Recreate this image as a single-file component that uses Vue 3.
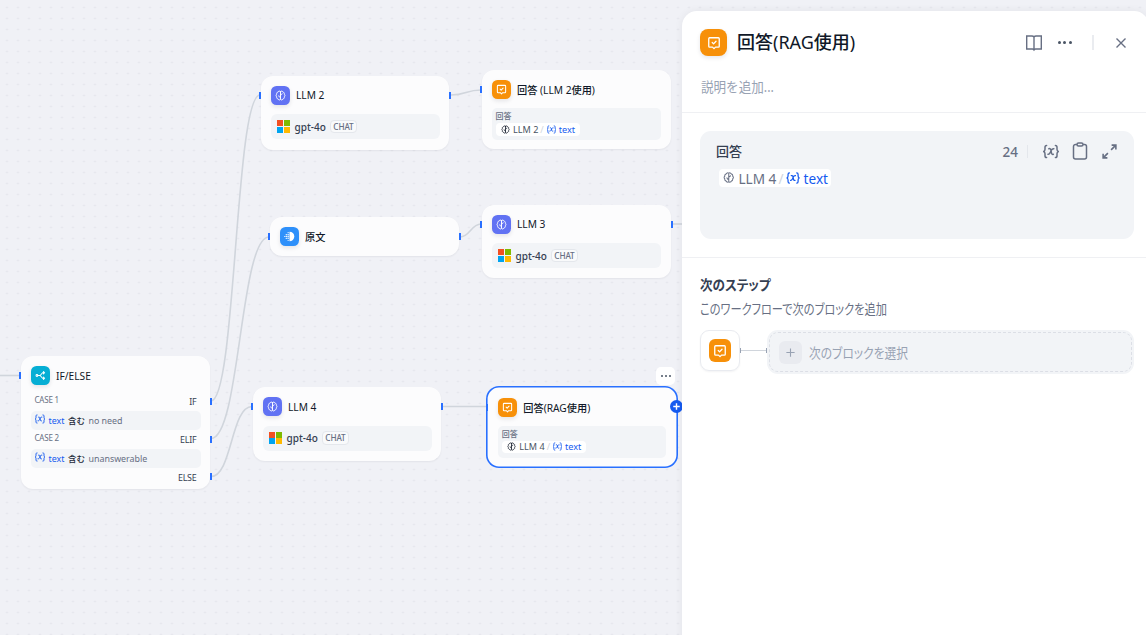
<template>
  <div class="workflow">
    <svg class="sprite" aria-hidden="true">
      <symbol id="i-llm" viewBox="0 0 16 16">
        <g fill="none" stroke="currentColor" stroke-width="1.4" stroke-linecap="round" stroke-linejoin="round">
          <path d="M8 2.2C6.9 1 4.9 1.5 4.5 3 2.9 3.2 2.1 4.7 2.6 6 1.2 7.1 1.2 8.9 2.6 10 2.1 11.4 2.9 12.8 4.5 13 4.9 14.5 6.9 15 8 13.8 9.1 15 11.1 14.5 11.5 13 13.1 12.8 13.9 11.4 13.4 10 14.8 8.9 14.8 7.1 13.4 6 13.9 4.7 13.1 3.2 11.5 3 11.1 1.5 9.1 1 8 2.2Z" />
          <path d="M8 3v10M8 10.8C6.5 10.6 5.7 9.8 5.5 8.5M8 7.3C9.3 7.1 10.2 6.5 10.4 5.5" />
        </g>
      </symbol>
      <symbol id="i-answer" viewBox="0 0 16 16">
        <g fill="none" stroke="currentColor" stroke-width="1.5" stroke-linecap="round" stroke-linejoin="round">
          <path d="M3 2h10a1 1 0 0 1 1 1v8.7a1 1 0 0 1-1 1H9.7L8 14.4 6.3 12.7H3a1 1 0 0 1-1-1V3a1 1 0 0 1 1-1Z" />
          <path d="m6 7.5 1.5 1.5 2.8-3" />
        </g>
      </symbol>
      <symbol id="i-knowledge" viewBox="0 0 16 16">
        <g fill="currentColor">
          <path d="M8 1a7 7 0 0 1 0 14Z" />
          <circle cx="6" cy="2.5" r=".9" />
          <circle cx="6" cy="5.3" r="1.1" />
          <circle cx="6" cy="8" r="1.1" />
          <circle cx="6" cy="10.7" r="1.1" />
          <circle cx="6" cy="13.5" r=".9" />
          <circle cx="3.3" cy="5.3" r="1" />
          <circle cx="3.3" cy="8" r="1.1" />
          <circle cx="3.3" cy="10.7" r="1" />
          <circle cx="1" cy="8" r=".8" />
        </g>
      </symbol>
      <symbol id="i-branch" viewBox="0 0 16 16">
        <g fill="none" stroke="currentColor" stroke-width="1.5" stroke-linecap="round" stroke-linejoin="round">
          <circle cx="2.8" cy="8" r="1.3" />
          <path d="M4.3 8H7.5l3.5-4h2.8M7.5 8l3.5 4h2.8M12.3 2.3 14 4l-1.7 1.7M12.3 10.3 14 12l-1.7 1.7" />
        </g>
      </symbol>
      <symbol id="i-var" viewBox="0 0 18 16">
        <g fill="none" stroke="currentColor" stroke-width="1.6" stroke-linecap="round" stroke-linejoin="round">
          <path d="M4.3 1.5C2.8 1.5 2.6 2.3 2.6 3.5v2C2.6 7 2.2 7.5 1.2 8c1 .5 1.4 1 1.4 2.5v2c0 1.2.2 2 1.7 2M13.7 1.5c1.5 0 1.7.8 1.7 2v2c0 1.5.4 2 1.4 2.5-1 .5-1.4 1-1.4 2.5v2c0 1.2-.2 2-1.7 2" />
          <path d="M6.7 5c1.3-.4 1.9.2 2.2 1.5l.6 3c.3 1.4.9 1.9 2 1.5M12 5c-1.5-.3-2.2.7-3 2.2L8.3 9C7.5 10.5 7 11.3 5.8 11" />
        </g>
      </symbol>
    </svg>

    <main class="canvas">
      <svg class="edges" width="1146" height="635">
        <path v-for="d in edges" :key="d" :d="d" />
      </svg>

      <section
        v-for="node in nodes"
        :key="node.id"
        class="node"
        :class="{ selected: node.selected }"
        :style="{ left: node.x + 'px', top: node.y + 'px', width: node.w + 'px', height: node.h + 'px' }"
      >
        <i v-for="(p, i) in node.handles" :key="i" class="handle" :class="p[0]" :style="{ top: p[1] + 'px' }"></i>
        <header class="node-head">
          <span class="block-icon" :class="node.type"><svg><use :href="'#i-' + node.type" /></svg></span>
          <span class="node-title">{{ node.title }}</span>
        </header>

        <div v-if="node.type === 'llm'" class="model">
          <span class="ms"><b></b><b></b><b></b><b></b></span>
          <span class="model-name">gpt-4o</span>
          <span class="mode">CHAT</span>
        </div>

        <div v-else-if="node.type === 'answer'" class="answer-box">
          <span class="answer-label">回答</span>
          <span class="chip">
            <svg class="chip-llm"><use href="#i-llm" /></svg>
            <span>{{ node.source }}</span>
            <em>/</em>
            <svg class="chip-var"><use href="#i-var" /></svg>
            <span class="var-name">text</span>
          </span>
        </div>

        <div v-else-if="node.type === 'branch'" class="cases">
          <template v-for="c in cases" :key="c.name">
            <div class="case-row"><span>{{ c.name }}</span><strong>{{ c.branch }}</strong></div>
            <div class="condition">
              <svg><use href="#i-var" /></svg>
              <span class="var-name">text</span>
              <b>含む</b>
              <span>{{ c.value }}</span>
            </div>
          </template>
          <div class="case-row"><span></span><strong>ELSE</strong></div>
        </div>

        <template v-if="node.selected">
          <span class="node-menu"><i></i><i></i><i></i></span>
          <span class="node-add"><svg viewBox="0 0 12 12"><path d="M6 3v6M3 6h6" /></svg></span>
        </template>
      </section>
    </main>

    <aside class="panel">
      <div class="panel-top">
        <div class="panel-head">
          <span class="block-icon answer large"><svg><use href="#i-answer" /></svg></span>
          <h1>回答(RAG使用)</h1>
          <div class="actions">
            <svg class="book" viewBox="0 0 18 18"><path d="M9 3v13.5M9 3C8.5 2.3 8 2 7 2H1.7v13H7.5c.8 0 1.2.3 1.5.8.3-.5.7-.8 1.5-.8h5.8V2H11c-1 0-1.5.3-2 1Z" /></svg>
            <span class="dots"><i></i><i></i><i></i></span>
            <span class="bar"></span>
            <svg class="close" viewBox="0 0 12 12"><path d="m1.5 1.5 9 9M10.5 1.5l-9 9" /></svg>
          </div>
        </div>
        <p class="desc"><span>説明を追加...</span></p>
      </div>

      <div class="panel-editor">
        <div class="editor">
          <div class="editor-head">
            <span class="editor-label">回答</span>
            <span class="count">24</span>
            <span class="editor-bar"></span>
            <svg class="e-var"><use href="#i-var" /></svg>
            <svg class="e-clip" viewBox="0 0 16 18"><path d="M5 2.5H3.5a2 2 0 0 0-2 2V15a2 2 0 0 0 2 2h9a2 2 0 0 0 2-2V4.5a2 2 0 0 0-2-2H11M6.5 1h3a1.5 1.5 0 0 1 0 3h-3a1.5 1.5 0 0 1 0-3Z" /></svg>
            <svg class="e-expand" viewBox="0 0 16 16"><path d="M10 2h4v4M14 2 9.5 6.5M6 14H2v-4M2 14l4.5-4.5" /></svg>
          </div>
          <span class="chip big">
            <svg class="chip-llm"><use href="#i-llm" /></svg>
            <span>LLM 4</span>
            <em>/</em>
            <svg class="chip-var"><use href="#i-var" /></svg>
            <span class="var-name">text</span>
          </span>
        </div>
      </div>

      <div class="next">
        <h2><span>次のステップ</span></h2>
        <p><span>このワークフローで次のブロックを追加</span></p>
        <div class="next-row">
          <div class="next-source"><span class="block-icon answer mid"><svg><use href="#i-answer" /></svg></span></div>
          <div class="link"></div>
          <div class="next-select">
            <span class="plus"><svg viewBox="0 0 12 12"><path d="M6 1.5v9M1.5 6h9" /></svg></span>
            <span class="next-text">次のブロックを選択</span>
          </div>
        </div>
      </div>
    </aside>
  </div>
</template>

<script setup>
const nodes = [
  { id: 'llm2', type: 'llm', title: 'LLM 2', x: 261, y: 75.5, w: 188, h: 74, handles: [['in', 16], ['out', 16]] },
  { id: 'answer2', type: 'answer', title: '回答 (LLM 2使用)', source: 'LLM 2', x: 482, y: 70, w: 188.5, h: 79, handles: [['in', 16]] },
  { id: 'source', type: 'knowledge', title: '原文', x: 270, y: 217, w: 188.5, h: 39, handles: [['in', 16], ['out', 16]] },
  { id: 'llm3', type: 'llm', title: 'LLM 3', x: 482, y: 204.5, w: 188.5, h: 73.5, handles: [['in', 16], ['out', 16]] },
  { id: 'ifelse', type: 'branch', title: 'IF/ELSE', x: 21, y: 356, w: 189, h: 133, handles: [['in', 16], ['out', 42], ['out', 79.5], ['out', 117]] },
  { id: 'llm4', type: 'llm', title: 'LLM 4', x: 253, y: 387, w: 188, h: 74, handles: [['in', 16], ['out', 16]] },
  { id: 'answer4', type: 'answer', title: '回答(RAG使用)', source: 'LLM 4', x: 486, y: 385.5, w: 192, h: 82.5, selected: true, handles: [['in', 16]] }
]

const cases = [
  { name: 'CASE 1', branch: 'IF', value: 'no need' },
  { name: 'CASE 2', branch: 'ELIF', value: 'unanswerable' }
]

const edges = [
  'M0 375.5H20',
  'M211 401C236 401 235 95 260 95',
  'M211 438.5C240 438.5 240 237 269 237',
  'M211 476.5C232 476.5 231 406.5 252 406.5',
  'M451 95C466 95 466 90 481 90',
  'M460 237C470 237 471 224 481 224',
  'M442 406.5H487',
  'M672 224H682'
]
</script>

<style>
body {
  background: #f0f1f6;
  overflow: hidden;
}
</style>

<style scoped>
.workflow {
  position: relative;
  width: 1146px;
  height: 635px;
  overflow: hidden;
  color: #354052;
  font-family: "Noto Sans", "Noto Sans CJK JP", sans-serif;
  white-space: nowrap;
}

.workflow * {
  box-sizing: border-box;
}

.sprite {
  position: absolute;
  width: 0;
  height: 0;
}

.canvas {
  height: 635px;
  background-color: #f0f1f6;
  background-image: radial-gradient(circle, #e2e4ea 0.7px, transparent 1.2px);
  background-size: 11.01px 11.01px;
  background-position: 1.5px 2px;
}

.edges {
  position: absolute;
  inset: 0;
}

.edges path {
  fill: none;
  stroke: #d0d5dc;
  stroke-width: 1.6;
}

/* nodes on the free canvas */
.node {
  position: absolute;
  padding: 10px 9.5px;
  border-radius: 12px;
  background: #fcfcfd;
  box-shadow: 0 1px 2px rgba(16, 24, 40, 0.06);
}

/* the ring is a shadow so that it can be thinner than 2px */
.node.selected {
  padding: 12px 11.8px;
  border-radius: 13px;
  box-shadow: inset 0 0 0 1.6px #2970ff;
}

.handle {
  position: absolute;
  width: 2px;
  height: 7px;
  background: #2970ff;
}

.handle.in {
  left: -2px;
}

.handle.out {
  right: -2px;
}

.selected .handle.in {
  left: 0;
  margin-top: 2px;
}

.node-head {
  display: flex;
  align-items: center;
  gap: 6.5px;
  height: 19px;
}

.block-icon {
  display: flex;
  flex: none;
  align-items: center;
  justify-content: center;
  width: 19px;
  height: 19px;
  border-radius: 5.5px;
  color: #fff;
  box-shadow: 0 2px 4px rgba(16, 24, 40, 0.1);
}

.block-icon svg {
  width: 11px;
  height: 11px;
}

.block-icon.llm {
  background: #6172f3;
}

.block-icon.answer {
  background: #f79009;
}

.block-icon.knowledge {
  background: #2e90fa;
}

.block-icon.branch {
  background: #06aed4;
}

.block-icon.large {
  width: 27px;
  height: 27px;
  border-radius: 8px;
}

.block-icon.large svg {
  width: 14px;
  height: 14px;
}

.block-icon.mid {
  width: 22px;
  height: 23px;
  border-radius: 6px;
  box-shadow: none;
}

.block-icon.mid svg {
  width: 14px;
  height: 14px;
}

.node-title {
  color: #101828;
  font-size: 10.2px;
  font-weight: 450;
}

.model {
  display: flex;
  align-items: center;
  height: 25px;
  margin-top: 9.5px;
  padding: 0 6.5px;
  border-radius: 6px;
  background: #f2f4f7;
}

.ms {
  display: grid;
  grid-template-columns: 6px 6px;
  grid-template-rows: 6px 6px;
  gap: 0.5px;
}

.ms b:nth-child(1) {
  background: #f25022;
}

.ms b:nth-child(2) {
  background: #7fba00;
}

.ms b:nth-child(3) {
  background: #00a4ef;
}

.ms b:nth-child(4) {
  background: #ffb900;
}

.model-name {
  margin-left: 5px;
  color: #354052;
  font-size: 10px;
  font-weight: 500;
}

.mode {
  margin-left: 4px;
  padding: 0 2.5px;
  border: 1px solid #e4e7ec;
  border-radius: 4px;
  background: #f9fafb;
  color: #676f83;
  font-size: 8.2px;
  letter-spacing: -0.1px;
  font-weight: 500;
  line-height: 11.5px;
}

.answer-box {
  display: flex;
  flex-direction: column;
  align-items: flex-start;
  height: 32px;
  margin-top: 9px;
  padding: 3px 4px;
  border-radius: 5px;
  background: #f2f4f7;
}

.answer-label {
  height: 12px;
  color: #676f83;
  font-size: 8px;
  font-weight: 500;
  line-height: 10px;
}

.chip {
  display: flex;
  align-items: center;
  height: 12.5px;
  padding: 0 5px 0 5.5px;
  border-radius: 4px;
  background: #fff;
  color: #495464;
  font-size: 9.1px;
}

.chip-llm {
  width: 9px;
  height: 9px;
  margin-right: 3px;
  color: #101828;
}

.chip em {
  margin: 0 2px;
  color: #d0d5dd;
  font-style: normal;
}

.chip-var {
  width: 11px;
  height: 9px;
  margin-right: 2px;
  color: #155aef;
}

.var-name {
  color: #155aef;
}

.cases {
  margin-top: 6.5px;
}

.case-row {
  display: flex;
  align-items: center;
  justify-content: space-between;
  height: 19px;
  padding: 0 4px;
  color: #676f83;
  font-size: 8px;
  letter-spacing: -0.2px;
}

.case-row span {
  padding-bottom: 3px;
}

.case-row strong {
  color: #354052;
  font-size: 8.9px;
  font-weight: 450;
}

.condition {
  display: flex;
  align-items: center;
  height: 19px;
  padding: 0 3px;
  border-radius: 5px;
  background: #f2f4f7;
  color: #676f83;
  font-size: 8.9px;
}

.condition svg {
  width: 12px;
  height: 10px;
  margin: -2px 3px 0 0;
  color: #155aef;
}

.condition b {
  margin: 0 3.5px;
  color: #1d2939;
  font-size: 8.5px;
  font-weight: 500;
}

.node-menu {
  position: absolute;
  top: -19px;
  right: 3px;
  display: flex;
  align-items: center;
  justify-content: center;
  gap: 2px;
  width: 19px;
  height: 18px;
  border-radius: 5px;
  background: #fff;
}

.node-menu i {
  width: 2px;
  height: 2px;
  border-radius: 50%;
  background: #495464;
}

.node-add {
  position: absolute;
  top: 14.5px;
  right: -5px;
  display: flex;
  width: 13px;
  height: 13px;
  border-radius: 50%;
  background: #155aef;
}

.node-add svg {
  width: 13px;
  fill: none;
  stroke: #fff;
  stroke-width: 1.3;
}

/* right side panel */
.panel {
  position: absolute;
  top: 11px;
  left: 682px;
  width: 467px;
  height: 640px;
  border-radius: 15px;
  background: #fff;
  box-shadow: 0 0 8px rgba(16, 24, 40, 0.06);
}

.panel-top {
  height: 102px;
  padding: 18px 18px 0;
  border-bottom: 1px solid #eff0f3;
}

.panel-head {
  display: flex;
  align-items: center;
  height: 27px;
}

h1 {
  margin: -3px 0 0 10px;
  color: #101828;
  font-size: 18px;
  font-weight: 450;
}

.actions {
  display: flex;
  align-items: center;
  margin-left: auto;
  margin-right: 4px;
  color: #495464;
}

.actions svg {
  fill: none;
  stroke: #676f83;
  stroke-width: 1.4;
}

.actions .book {
  width: 18px;
  height: 18px;
}

.dots {
  display: flex;
  gap: 2.2px;
  margin-left: 15.5px;
}

.dots i {
  width: 3px;
  height: 3px;
  border-radius: 50%;
  background: #495464;
}

.bar {
  width: 2px;
  height: 15px;
  margin: 0 21.5px 0 20px;
  background: #eaecf0;
}

.actions .close {
  width: 12px;
  height: 12px;
}

.desc {
  margin: 21px 0 0 1px;
  color: #98a2b3;
  font-size: 13.5px;
  line-height: 20px;
}

.desc span,
h2 span,
.next p span,
.next-text {
  display: inline-block;
  transform: scaleX(0.93);
  transform-origin: left;
}

/* proportional kana, slightly condensed */
h2 span,
.next p span,
.next-text {
  font-feature-settings: "palt";
}

.next p span {
  transform: scaleX(0.83);
}

.next .next-text {
  transform: scaleX(0.87);
}

.panel-editor {
  height: 145px;
  padding: 18px 15px 0 18px;
  border-bottom: 1px solid #eff0f3;
}

.editor {
  width: 434px;
  height: 108px;
  padding: 10px 16px;
  border-radius: 11px;
  background: #f2f4f7;
}

.editor-head {
  display: flex;
  align-items: center;
  height: 20px;
}

.editor-head svg {
  color: #676f83;
  fill: none;
  stroke: currentColor;
  stroke-width: 1.5;
}

.editor-label {
  margin-top: -2px;
  font-size: 13px;
  font-weight: 500;
}

.count {
  margin-top: 1px;
  margin-left: auto;
  color: #676f83;
  font-size: 13.5px;
  font-weight: 500;
}

.editor-bar {
  width: 1px;
  height: 13px;
  margin: 0 14px 0 9px;
  background: #e4e7ec;
}

.e-var {
  width: 18px;
  height: 15px;
}

.e-clip {
  width: 16px;
  height: 18px;
  margin-left: 12px;
}

.e-expand {
  width: 17px;
  height: 17px;
  margin-left: 13px;
}

.chip.big {
  width: 112px;
  height: 18px;
  margin: 8px 0 0 3px;
  padding: 1px 3px 0 4px;
  color: #676f83;
  font-size: 13.6px;
}

.big .chip-llm {
  width: 13px;
  height: 13px;
  margin: -2px 4px 0 0;
  color: #676f83;
}

.big .chip-var {
  width: 16px;
  height: 14px;
  margin: -2px 3px 0 1px;
}

.next {
  padding: 17px 15px 17px 18px;
}

h2 {
  margin: 0;
  color: #354052;
  font-size: 13.5px;
  font-weight: 600;
  line-height: 20px;
}

.next p {
  margin: 4px 0 11px;
  color: #676f83;
  font-size: 13.5px;
  line-height: 20px;
}

.next-row {
  display: flex;
  align-items: flex-start;
}

.next-source {
  display: flex;
  flex: none;
  align-items: center;
  justify-content: center;
  width: 40px;
  height: 41px;
  border: 1px solid #e9ebf0;
  border-radius: 9px;
  box-shadow: 0 1px 2px rgba(16, 24, 40, 0.05);
}

.link {
  flex: none;
  width: 27px;
  height: 5px;
  margin-top: 18px;
  border: solid #98a2b3;
  border-width: 0 1px;
  background: linear-gradient(#d0d5dc, #d0d5dc) center / 100% 1px no-repeat;
}

.next-select {
  display: flex;
  flex: 1;
  align-items: center;
  height: 44px;
  padding: 0 10px;
  border: 2px solid #f2f4f7;
  border-radius: 11px;
  outline: 1px dashed #dcdfe6;
  outline-offset: -3px;
  background: #f2f4f7;
}

.plus {
  display: flex;
  align-items: center;
  justify-content: center;
  width: 23px;
  height: 23px;
  border-radius: 6px;
  background: #e9ebf0;
}

.plus svg {
  width: 11px;
  height: 11px;
  fill: none;
  stroke: #98a2b3;
  stroke-width: 1.2;
}

.next-text {
  margin-left: 7px;
  color: #98a2b3;
  font-size: 13.5px;
}
</style>
